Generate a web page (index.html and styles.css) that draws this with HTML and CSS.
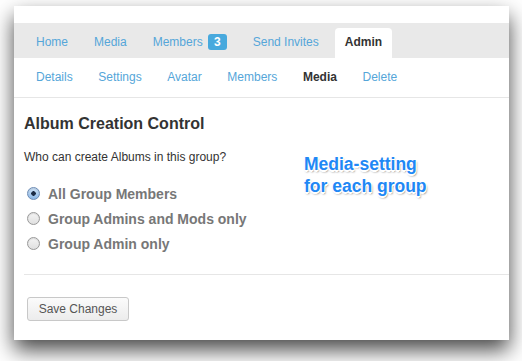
FILE: index.html
```html
<!DOCTYPE html>
<html>
<head>
<meta charset="utf-8">
<link rel="stylesheet" href="styles.css">
</head>
<body>
<div class="panel">
  <div class="topstrip"></div>
  <ul class="tabs">
    <li class="tab"><a>Home</a></li>
    <li class="tab"><a>Media</a></li>
    <li class="tab"><a>Members</a><span class="badge">3</span></li>
    <li class="tab"><a>Send Invites</a></li>
    <li class="tab active"><a>Admin</a></li>
  </ul>
  <ul class="subnav">
    <li><a>Details</a></li>
    <li><a>Settings</a></li>
    <li><a>Avatar</a></li>
    <li><a>Members</a></li>
    <li class="current"><a>Media</a></li>
    <li><a>Delete</a></li>
  </ul>
  <div class="content">
    <h2 class="title">Album Creation Control</h2>
    <p class="question">Who can create Albums in this group?</p>
    <div class="options">
      <label class="option"><span class="radio checked"></span>All Group Members</label>
      <label class="option"><span class="radio"></span>Group Admins and Mods only</label>
      <label class="option"><span class="radio"></span>Group Admin only</label>
    </div>
    <div class="annotation">Media-setting<br>for each group</div>
    <div class="rule"></div>
    <button class="save">Save Changes</button>
  </div>
</div>
</body>
</html>
```
FILE: styles.css
```css
html, body { margin: 0; padding: 0; background: #fff; }
body {
  width: 522px; height: 361px; overflow: hidden;
  font-family: "Liberation Sans", Arial, sans-serif;
}
.panel {
  margin: 6px 0 0 14px;
  width: 495px;
  height: 334px;
  background: #fff;
  box-shadow: 0 10px 20px rgba(0,0,0,0.72);
  position: relative;
}
.topstrip { height: 17px; }
.tabs {
  list-style: none; margin: 0; padding: 0 0 0 12px;
  height: 35px; background: #e9e9e9;
  display: flex; align-items: flex-end;
}
.tab {
  height: 30px; padding: 0 10px; margin-right: 6px;
  display: flex; align-items: center;
  font-size: 12px; color: #55a6d9;
  border-radius: 4px 4px 0 0;
  box-sizing: border-box; padding-bottom: 2px;
}
.tab.active { background: #fff; color: #333; font-weight: bold; }
.badge {
  margin-left: 5px; background: #48a9dd; color: #fff;
  font-weight: bold; font-size: 12px;
  width: 19px; height: 16px; border-radius: 3px;
  display: inline-flex; align-items: center; justify-content: center;
}
.subnav {
  list-style: none; margin: 0; padding: 0 0 0 22px;
  height: 39px; border-bottom: 1px solid #e6e6e6;
  display: flex; align-items: center; gap: 25.6px;
  font-size: 12px; color: #55a6d9;
}
.subnav li { padding-bottom: 1px; }
.subnav .current { color: #333; font-weight: bold; }
.content { padding-left: 10px; position: relative; }
.title {
  margin: 0; padding-top: 16px;
  font-size: 16px; font-weight: bold; color: #333; line-height: 19px;
}
.question {
  margin: 0; padding-top: 17px;
  font-size: 12px; color: #333; line-height: 14px;
}
.options { padding-top: 17px; display: flex; flex-direction: column; }
.option {
  height: 25px; display: flex; align-items: center;
  font-size: 14px; font-weight: bold; color: #777;
}
.radio {
  width: 11px; height: 11px; border-radius: 50%;
  border: 1px solid #999; margin: 0 8px 0 3px;
  background: linear-gradient(#f4f4f4, #e0e0e0);
  box-shadow: inset 0 1px 1px rgba(0,0,0,0.1);
  position: relative;
}
.radio.checked {
  border-color: #6d8cb5;
  background: radial-gradient(circle at 50% 50%, #1b2b45 0 2px, transparent 2.5px), linear-gradient(#cfe3f7, #8ab6e6);
}
.annotation {
  position: absolute; left: 290px; top: 55px;
  font-size: 17.5px; font-weight: bold; line-height: 22px;
  color: #1f88f5;
  text-shadow: -1px -1px 0 #fff, 1px -1px 0 #fff, -1px 1px 0 #fff, 1px 1px 0 #fff,
               0 2px 0 #fff, 1px 2px 2px rgba(0,0,0,0.55);
}
.rule { margin-top: 18px; height: 1px; background: #e6e6e6; }
.save {
  margin: 22px 0 0 3px;
  height: 24px; padding: 0 10px;
  width: 102px;
  font-family: "Liberation Sans", Arial, sans-serif;
  font-size: 12px; color: #555;
  border: 1px solid #c8c8c8; border-radius: 3px;
  background: linear-gradient(#fbfbfb, #ececec);
}
```
